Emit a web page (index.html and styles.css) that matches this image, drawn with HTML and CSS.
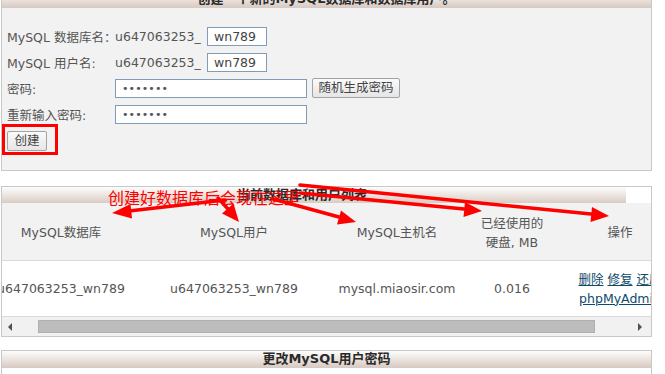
FILE: index.html
```html
<!DOCTYPE html>
<html lang="zh-CN">
<head>
<meta charset="utf-8">
<title>MySQL 数据库</title>
<link rel="stylesheet" href="styles.css">
</head>
<body>
<div class="page">
  <section class="panel panel-create">
    <div class="panel-head">创建一个新的MySQL数据库和数据库用户。</div>
    <div class="form">
      <div class="row">
        <span class="label">MySQL 数据库名：</span><span class="prefix">u647063253_</span><span class="input short">wn789</span>
      </div>
      <div class="row">
        <span class="label">MySQL 用户名:</span><span class="prefix">u647063253_</span><span class="input short">wn789</span>
      </div>
      <div class="row">
        <span class="label">密码:</span><span class="input long pw">•••••••</span><button class="btn btn-gen">随机生成密码</button>
      </div>
      <div class="row">
        <span class="label">重新输入密码:</span><span class="input long pw">•••••••</span>
      </div>
      <div class="row-submit">
        <button class="btn btn-create">创建</button>
        <span class="hl-box"></span>
      </div>
    </div>
  </section>

  <section class="panel panel-list">
    <div class="panel-head list-head">当前数据库和用户列表</div>
    <div class="scroll">
      <div class="grid grid-head">
        <div class="cell">MySQL数据库</div>
        <div class="cell">MySQL用户</div>
        <div class="cell">MySQL主机名</div>
        <div class="cell">已经使用的<br>硬盘, MB</div>
        <div class="cell">操作</div>
      </div>
      <div class="grid grid-row">
        <div class="cell">u647063253_wn789</div>
        <div class="cell">u647063253_wn789</div>
        <div class="cell">mysql.miaosir.com</div>
        <div class="cell">0.016</div>
        <div class="cell actions"><span><a href="#">删除</a> <a href="#">修复</a> <a href="#">还原</a></span><a href="#">phpMyAdmin</a></div>
      </div>
    </div>
    <div class="scrollbar">
      <span class="arrow arrow-l"></span>
      <span class="thumb"></span>
      <span class="arrow arrow-r"></span>
    </div>
  </section>

  <section class="panel panel-pass">
    <div class="panel-head">更改MySQL用户密码</div>
    <div class="pass-body"></div>
  </section>

  <div class="annotation">
    <span class="note">创建好数据库后会现在这里</span>
    <svg class="arrows" width="665" height="374" viewBox="0 0 665 374">
      <g stroke="#ff0000" stroke-width="3.5" stroke-linecap="round" fill="none">
        <line x1="225" y1="210" x2="129" y2="221"/>
        <line x1="218" y1="208" x2="228" y2="219"/>
        <line x1="273" y1="209" x2="339" y2="227"/>
        <line x1="300" y1="203" x2="464" y2="219"/>
        <line x1="300" y1="195" x2="591" y2="224"/>
      </g>
      <g fill="#ff0000">
        <polygon points="112,223 130.5,214 132,228.5"/>
        <polygon points="239,232 222,223.5 233.5,213.5"/>
        <polygon points="356,232 337,234.5 341,220.5"/>
        <polygon points="482,221 463.5,227 465,212"/>
        <polygon points="609,226 590.5,232 592,217"/>
      </g>
    </svg>
  </div>
</div>
</body>
</html>
```

FILE: styles.css
```css
* { box-sizing: border-box; }

html, body {
  margin: 0;
  padding: 0;
  background: #fff;
}

body {
  width: 665px;
  height: 374px;
  overflow: hidden;
  font-family: "DejaVu Sans", "Noto Sans CJK SC", sans-serif;
  font-size: 12.5px;
  color: #555;
}

.page {
  position: relative;
  width: 665px;
  height: 374px;
}

.panel {
  margin-left: 1px;
  width: 651px;
  border: 1px solid #c8c8c8;
  background: #fff;
}

.panel-head {
  height: 17px;
  line-height: 16px;
  border-bottom: 1px solid #d6ccc5;
  background: linear-gradient(to bottom, #fdfdfd 0%, #f1ece9 35%, #e5dbd4 70%, #d8ccc4 100%);
  text-align: center;
  font-weight: bold;
  font-size: 13px;
  color: #2a2a2a;
}

/* ---------- create panel ---------- */
.panel-create {
  margin-top: -10px;
  background: #f2f2f2;
}

.form {
  padding: 15px 0 19px 5px;
}

.row {
  display: flex;
  align-items: center;
  height: 26px;
}

.label {
  width: 108px;
  flex: none;
  white-space: nowrap;
}

.prefix {
  width: 92px;
  flex: none;
  white-space: nowrap;
}

.input {
  display: inline-flex;
  align-items: center;
  height: 19px;
  border: 1px solid #7f9db9;
  background: #fff;
  padding-left: 6px;
  color: #444;
}

.input.short { width: 60px; }
.input.long { width: 192px; }

.input.pw {
  padding-left: 6px;
  font-size: 11px;
  letter-spacing: 0.1px;
  color: #555;
}

.btn {
  font-family: "DejaVu Sans", "Noto Sans CJK SC", sans-serif;
  font-size: 12.5px;
  color: #444;
  border: 1px solid #a3a3a3;
  border-radius: 2px;
  background: linear-gradient(to bottom, #fafafa, #e6e6e6);
  padding: 0;
  height: 20px;
  line-height: 18px;
}

.btn-gen {
  margin-left: 5px;
  width: 88px;
}

.row-submit {
  position: relative;
  margin-top: 4px;
  height: 20px;
}

.btn-create {
  width: 40px;
}

.hl-box {
  position: absolute;
  left: -5px;
  top: -7px;
  width: 56px;
  height: 31px;
  border: 3px solid #ff0000;
}

/* ---------- list panel ---------- */
.panel-list {
  margin-top: 15px;
}

.list-head {
  width: 624px;
  height: 16px;
  border-bottom: none;
  padding-right: 24px;
}

.scroll {
  width: 649px;
  overflow: hidden;
}

.grid {
  display: grid;
  grid-template-columns: 174px 172px 154px 76px 140px;
  width: 716px;
  margin-left: -28px;
}

.cell {
  display: flex;
  flex-direction: column;
  align-items: center;
  justify-content: center;
  text-align: center;
  white-space: nowrap;
  line-height: 19px;
}

.grid-head {
  height: 58px;
  background: #f2f2f2;
  border-bottom: 1px solid #dadada;
}

.grid-head .cell {
  padding-top: 2px;
}

.grid-row {
  height: 55px;
  background: #fff;
}

.actions a {
  color: #0e4a6b;
  text-decoration: underline;
}

.scrollbar {
  display: flex;
  align-items: center;
  height: 20px;
  border-top: 1px solid #dadada;
  background: #f1f1f1;
}

.arrow {
  width: 0;
  height: 0;
  border-top: 4px solid transparent;
  border-bottom: 4px solid transparent;
}

.arrow-l {
  margin-left: 6px;
  border-right: 4px solid #505050;
}

.thumb {
  margin-left: 26px;
  width: 557px;
  height: 13px;
  background: #bcbcbc;
  border: 1px solid #b0b0b0;
}

.arrow-r {
  margin-left: 43px;
  border-left: 4px solid #505050;
}

/* ---------- password panel ---------- */
.panel-pass {
  margin-top: 13px;
}

.pass-body {
  height: 30px;
}

/* ---------- annotation overlay ---------- */
.annotation {
  position: absolute;
  left: 0;
  top: 0;
  width: 665px;
  height: 374px;
  pointer-events: none;
}

.note {
  position: absolute;
  left: 108px;
  top: 198px;
  font-family: "Noto Sans CJK SC", sans-serif;
  font-size: 16px;
  line-height: 18px;
  color: #ff0000;
  white-space: nowrap;
}

.arrows {
  position: absolute;
  left: 0;
  top: 0;
}
```
